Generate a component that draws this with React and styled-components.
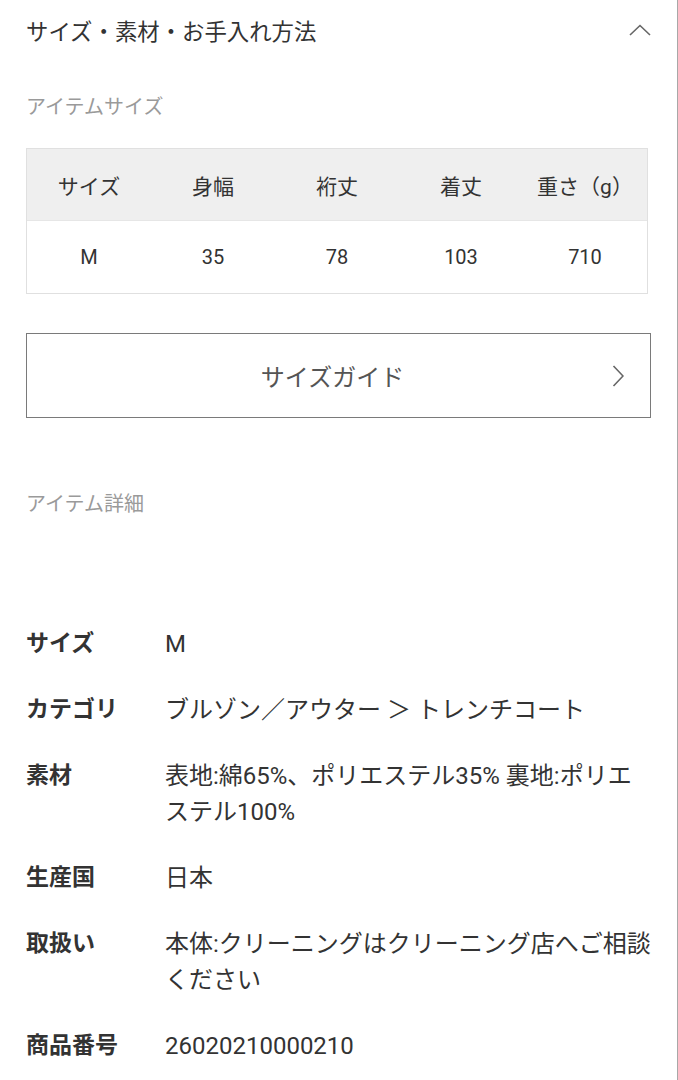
import React from "react";
import styled, { createGlobalStyle } from "styled-components";

const GlobalStyle = createGlobalStyle`
  html, body {
    margin: 0;
    padding: 0;
    background: #ffffff;
  }
  body {
    font-family: "Roboto", "Noto Sans CJK JP", sans-serif;
    color: #333333;
  }
`;

const Page = styled.div`
  box-sizing: border-box;
  width: 678px;
  min-height: 1080px;
  padding: 0 26px;
  border-right: 1px solid #a8a8a8;
`;

const Header = styled.div`
  height: 60px;
  display: flex;
  align-items: center;
  justify-content: space-between;
`;

const Title = styled.span`
  font-size: 22.4px;
  color: #333333;
`;

const SectionLabel = styled.div`
  font-size: 20px;
  line-height: 30px;
  color: #9a9a9a;
  margin-top: ${(p) => p.$top}px;
`;

const SizeTable = styled.div`
  margin-top: 26px;
  margin-right: 3px;
  border: 1px solid #e0e0e0;
`;

const TableRow = styled.div`
  display: grid;
  grid-template-columns: repeat(5, 1fr);
  height: ${(p) => (p.$head ? 71 : 72)}px;
  background: ${(p) => (p.$head ? "#efefef" : "#ffffff")};
  border-top: ${(p) => (p.$head ? "none" : "1px solid #e6e6e6")};
`;

const Cell = styled.div`
  display: flex;
  align-items: center;
  justify-content: center;
  font-size: ${(p) => (p.$head ? 21 : 20)}px;
  color: #333333;
`;

const GuideButton = styled.button`
  box-sizing: border-box;
  margin-top: 39px;
  width: 100%;
  height: 85px;
  border: 1px solid #7a7a7a;
  background: #ffffff;
  display: flex;
  align-items: center;
  justify-content: center;
  position: relative;
  font-family: "Roboto", "Noto Sans CJK JP", sans-serif;
  font-size: 24px;
  color: #555555;
  padding: 0 12px 0 0;
`;

const ButtonArrow = styled.svg`
  position: absolute;
  right: 26px;
  top: 50%;
  transform: translateY(-50%);
`;

const DetailList = styled.div`
  margin-top: 107px;
  display: flex;
  flex-direction: column;
  gap: 30px;
`;

const DetailRow = styled.div`
  display: grid;
  grid-template-columns: 139px 1fr;
  line-height: 36px;
`;

const DetailKey = styled.div`
  font-size: 23px;
  font-weight: 700;
  color: #333333;
`;

const DetailValue = styled.div`
  font-size: 24px;
  color: #333333;
`;

const sizes = {
  head: ["サイズ", "身幅", "裄丈", "着丈", "重さ（g）"],
  body: ["M", "35", "78", "103", "710"],
};

const details = [
  ["サイズ", "M"],
  ["カテゴリ", "ブルゾン／アウター ＞ トレンチコート"],
  ["素材", "表地:綿65%、ポリエステル35% 裏地:ポリエステル100%"],
  ["生産国", "日本"],
  ["取扱い", "本体:クリーニングはクリーニング店へご相談ください"],
  ["商品番号", "26020210000210"],
];

function App() {
  return (
    <>
      <GlobalStyle />
      <Page>
        <Header>
          <Title>サイズ・素材・お手入れ方法</Title>
          <svg width="22" height="12" viewBox="0 0 22 12">
            <polyline
              points="1,11 11,1.5 21,11"
              fill="none"
              stroke="#666"
              strokeWidth="1.6"
            />
          </svg>
        </Header>

        <SectionLabel $top={32}>アイテムサイズ</SectionLabel>
        <SizeTable>
          <TableRow $head>
            {sizes.head.map((h) => (
              <Cell $head key={h}>
                {h}
              </Cell>
            ))}
          </TableRow>
          <TableRow>
            {sizes.body.map((v) => (
              <Cell key={v}>{v}</Cell>
            ))}
          </TableRow>
        </SizeTable>

        <GuideButton>
          サイズガイド
          <ButtonArrow width="12" height="22" viewBox="0 0 12 22">
            <polyline
              points="1.5,1 11,11 1.5,21"
              fill="none"
              stroke="#666"
              strokeWidth="1.6"
            />
          </ButtonArrow>
        </GuideButton>

        <SectionLabel $top={71}>アイテム詳細</SectionLabel>

        <DetailList>
          {details.map(([k, v]) => (
            <DetailRow key={k}>
              <DetailKey>{k}</DetailKey>
              <DetailValue>{v}</DetailValue>
            </DetailRow>
          ))}
        </DetailList>
      </Page>
    </>
  );
}

export default App;
